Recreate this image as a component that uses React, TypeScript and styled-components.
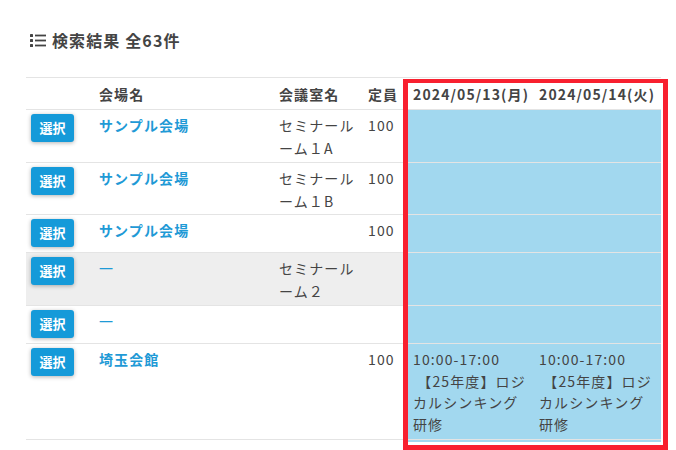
import styled, { createGlobalStyle } from 'styled-components';

const GlobalStyle = createGlobalStyle`
	html, body {
		margin: 0;
		padding: 0;
		background: #fff;
		overflow: hidden;
	}
	body {
		font-family: 'Noto Sans CJK JP', 'Noto Sans', sans-serif;
		font-size: 14px;
		letter-spacing: 0.08em;
		color: #444;
	}
`;

type Room = {
	venue: string;
	link?: boolean;
	room: string;
	capacity: string;
	height: number;
	grey?: boolean;
	slot?: boolean;
};

const rooms: Room[] = [
	{ venue: 'サンプル会場', link: true, room: 'セミナールーム１A', capacity: '100', height: 52 },
	{ venue: 'サンプル会場', link: true, room: 'セミナールーム１B', capacity: '100', height: 51 },
	{ venue: 'サンプル会場', link: true, room: '', capacity: '100', height: 37 },
	{ venue: '一', room: 'セミナールーム２', capacity: '', height: 52, grey: true },
	{ venue: '一', room: '', capacity: '', height: 37 },
	{ venue: '埼玉会館', link: true, room: '', capacity: '100', height: 95, slot: true },
];

const App = () => {
	return (
		<Page>
			<GlobalStyle />
			<Title>
				<svg width="16" height="13" viewBox="0 0 16 13" fill="#444">
					<rect x="0" y="0" width="3" height="3" rx="0.6" />
					<rect x="0" y="5" width="3" height="3" rx="0.6" />
					<rect x="0" y="10" width="3" height="3" rx="0.6" />
					<rect x="5" y="0.6" width="11" height="1.8" />
					<rect x="5" y="5.6" width="11" height="1.8" />
					<rect x="5" y="10.6" width="11" height="1.8" />
				</svg>
				検索結果 全63件
			</Title>
			<Table>
				<HeadRow>
					<span />
					<HeadCell>会場名</HeadCell>
					<HeadCell>会議室名</HeadCell>
					<HeadCell>定員</HeadCell>
					<HeadCell>2024/05/13(月)</HeadCell>
					<HeadCell>2024/05/14(火)</HeadCell>
				</HeadRow>
				{rooms.map((r, i) => (
					<Row key={i} $height={r.height} $grey={r.grey}>
						<SelectCell>
							<SelectButton>選択</SelectButton>
						</SelectCell>
						<VenueCell $link={r.link}>{r.venue}</VenueCell>
						<Cell>{r.room}</Cell>
						<Cell>{r.capacity}</Cell>
						<SlotCell>{r.slot && <Slot />}</SlotCell>
						<SlotCell>{r.slot && <Slot />}</SlotCell>
					</Row>
				))}
				<TailRow>
					<TailCell />
				</TailRow>
			</Table>
			<Highlight />
		</Page>
	);
};

const Slot = () => (
	<>
		10:00-17:00
		<br />
		<SlotTitle>{'\u00a0【25年度】ロジカルシンキング研修'}</SlotTitle>
	</>
);

const Page = styled.div`
	position: relative;
	width: 676px;
	height: 450px;
	padding: 29px 15px 0 26px;
	box-sizing: border-box;
`;

const Title = styled.h2`
	display: flex;
	align-items: center;
	gap: 6px;
	height: 22px;
	margin: 0 0 26px 4px;
	font-size: 16px;
	font-weight: 700;
	line-height: 22px;
	color: #444;
`;

const columns = '68px 180px 89px 45px 126px 127px';

const Table = styled.div`
	width: 635px;
	border-top: 1px solid #e4e4e4;
`;

const HeadRow = styled.div`
	display: grid;
	grid-template-columns: ${columns};
	height: 31px;
	border-bottom: 1px solid #e4e4e4;
`;

const HeadCell = styled.div`
	padding: 0 5px;
	font-weight: 700;
	line-height: 32px;
	white-space: nowrap;
	color: #444;
`;

const Row = styled.div<{ $height: number; $grey?: boolean }>`
	display: grid;
	grid-template-columns: ${columns};
	height: ${(p) => p.$height}px;
	border-bottom: 1px solid #e4e4e4;
	background: ${(p) => (p.$grey ? '#eeeeee' : 'transparent')};
`;

const TailRow = styled.div`
	display: flex;
	justify-content: flex-end;
`;

const TailCell = styled.div`
	width: 253px;
	height: 2px;
	background: #a2d8ef;
`;

const SelectCell = styled.div`
	padding: 4px 0 0 5px;
`;

const SelectButton = styled.button`
	display: block;
	width: 43px;
	height: 28px;
	padding: 0 0 2px;
	border: none;
	border-radius: 3px;
	background: #159ad9;
	box-shadow: 0 1px 4px rgba(0, 0, 0, 0.3);
	color: #fff;
	font-family: inherit;
	font-size: 13px;
	font-weight: 700;
	letter-spacing: 0;
`;

const Cell = styled.div`
	padding: 4px 5px 0;
	line-height: 23px;
`;

const VenueCell = styled(Cell)<{ $link?: boolean }>`
	font-weight: ${(p) => (p.$link ? 700 : 400)};
	color: #1f9ad6;
`;

const SlotCell = styled.div`
	padding: 5px 5px 0;
	line-height: 21.7px;
	background: #a2d8ef;
	color: #444;
`;

const SlotTitle = styled.span`
	display: block;
`;

const Highlight = styled.div`
	position: absolute;
	left: 403px;
	top: 79px;
	width: 265px;
	height: 371px;
	box-sizing: border-box;
	border: 5px solid #f8202f;
	border-top-width: 4px;
	pointer-events: none;
`;

export default App;
